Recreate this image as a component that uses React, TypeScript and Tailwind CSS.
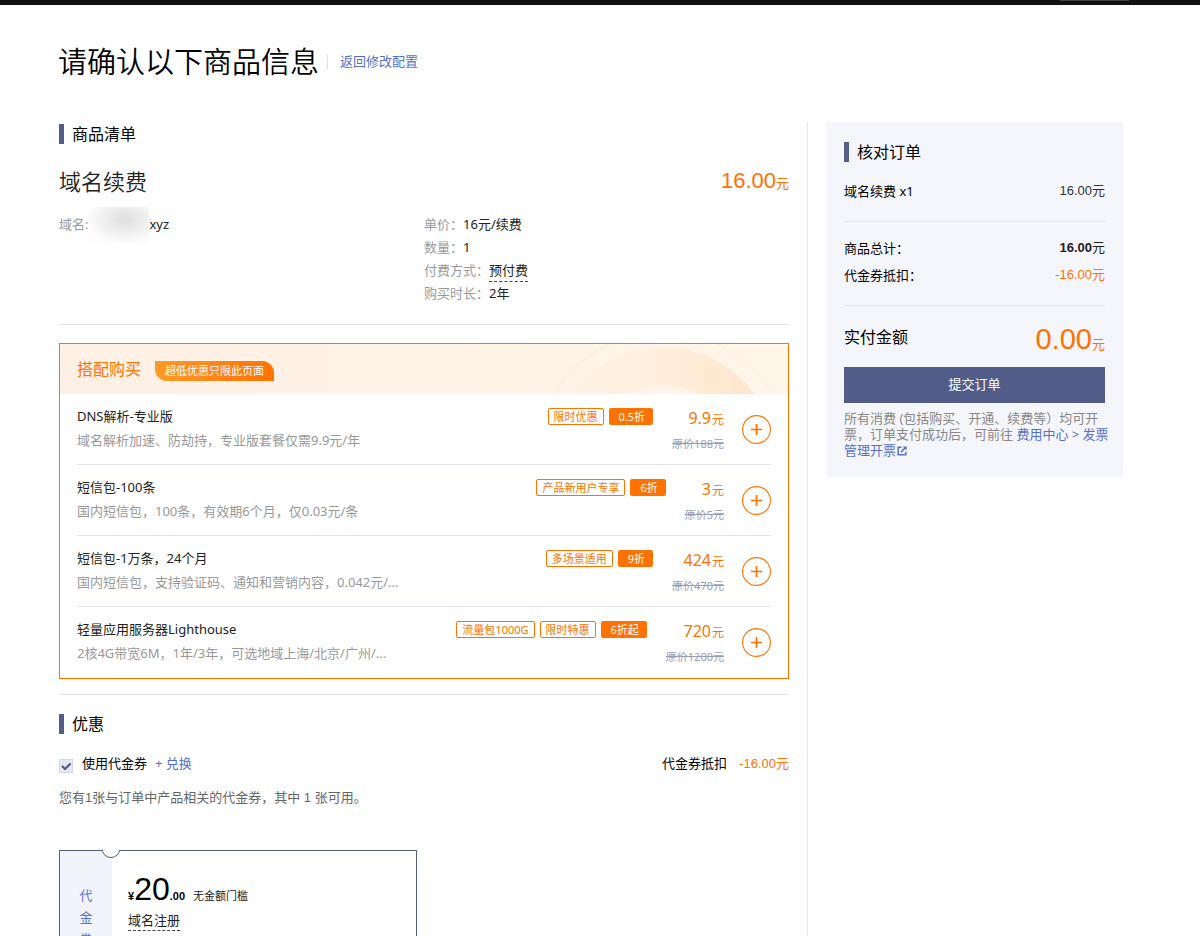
import React, { useState } from "react";

type Offer = {
  name: string;
  desc: string;
  tags: string[];
  discount: string;
  price: string;
  origin: string;
};

const offers: Offer[] = [
  {
    name: "DNS解析-专业版",
    desc: "域名解析加速、防劫持，专业版套餐仅需9.9元/年",
    tags: ["限时优惠"],
    discount: "0.5折",
    price: "9.9",
    origin: "原价188元",
  },
  {
    name: "短信包-100条",
    desc: "国内短信包，100条，有效期6个月，仅0.03元/条",
    tags: ["产品新用户专享"],
    discount: "6折",
    price: "3",
    origin: "原价5元",
  },
  {
    name: "短信包-1万条，24个月",
    desc: "国内短信包，支持验证码、通知和营销内容，0.042元/...",
    tags: ["多场景适用"],
    discount: "9折",
    price: "424",
    origin: "原价470元",
  },
  {
    name: "轻量应用服务器Lighthouse",
    desc: "2核4G带宽6M，1年/3年，可选地域上海/北京/广州/...",
    tags: ["流量包1000G", "限时特惠"],
    discount: "6折起",
    price: "720",
    origin: "原价1200元",
  },
];

const SectionTitle = ({ children }: { children: React.ReactNode }) => (
  <h2 className="flex h-5 items-center gap-2 text-base leading-5 text-black">
    <span className="h-5 w-[5px] bg-[#535e88]" />
    {children}
  </h2>
);

const OfferRow = ({ name, desc, tags, discount, price, origin }: Offer) => (
  <li className="flex h-[71px] border-b border-[#e5e7ec] last:border-transparent">
    <div className="min-w-0 flex-1 pt-3">
      <h3 className="truncate leading-5 text-[#222]">{name}</h3>
      <p className="mt-1 truncate leading-5 text-[#999]">{desc}</p>
    </div>
    <div className="mt-[14px] flex h-[17px] shrink-0 gap-[5px] text-[11px] leading-[15px]">
      {tags.map((tag) => (
        <span key={tag} className="rounded-xs border border-[#ff7200] px-[5px] text-[#ff7200]">
          {tag}
        </span>
      ))}
      <span className="rounded-xs bg-[#ff7200] pt-px pr-2 pl-[10px] text-white">{discount}</span>
    </div>
    <div className="ml-[19px] shrink-0 pt-3 text-right">
      <p className="flex items-baseline justify-end gap-px leading-6 text-[#ff7200]">
        <span className="text-base leading-6">{price}</span>
        <span className="text-xs leading-6">元</span>
      </p>
      <del className="block text-[11px] leading-6 text-[#959fb8]">{origin}</del>
    </div>
    <button
      aria-label={`添加 ${name}`}
      className="mt-[21px] ml-[18px] h-[29px] w-[29px] shrink-0 cursor-pointer text-[#ff7200]"
    >
      <svg viewBox="0 0 29 29" className="h-full w-full" fill="none" stroke="currentColor">
        <circle cx="14.5" cy="14.5" r="13.9" strokeWidth="1.1" />
        <path d="M9 14.5h11M14.5 9v11" strokeWidth="1.7" />
      </svg>
    </button>
  </li>
);

const Bundle = () => (
  <section className="mt-[18px] border border-[#ff7200]">
    <div className="relative flex h-[50px] items-center gap-[14px] bg-linear-to-r from-[#fff0e5] to-[#fff5e8] px-[17px]">
      <svg
        viewBox="0 0 248 50"
        className="absolute top-0 right-0 h-[50px] w-[248px]"
        fill="none"
      >
        <defs>
          <linearGradient id="arc" x1="0" y1="0.3" x2="1" y2="0.3">
            <stop offset="0" stopColor="#fff3e5" />
            <stop offset="0.4" stopColor="#fff0df" />
            <stop offset="1" stopColor="#ffe3c8" />
          </linearGradient>
        </defs>
        <circle cx="123" cy="117" r="128.7" stroke="#ffebd4" />
        <circle cx="123" cy="117" r="113.5" fill="url(#arc)" />
        <circle cx="123" cy="117" r="76" fill="#fff4e7" />
      </svg>
      <h2 className="relative text-base text-[#ff7200]">搭配购买</h2>
      <span className="relative mt-1 h-5 rounded-tr-xl rounded-bl-xl bg-linear-to-r from-[#ff9a26] to-[#ff7200] px-[10px] text-[11px] leading-[19px] text-white">
        超低优惠只限此页面
      </span>
    </div>
    <ul className="px-[17px]">
      {offers.map((offer) => (
        <OfferRow key={offer.name} {...offer} />
      ))}
    </ul>
  </section>
);

const Field = ({ label, children }: { label: string; children: React.ReactNode }) => (
  <div className="flex h-[23px] items-center">
    <dt className="text-[#999]">{label}</dt>
    <dd>{children}</dd>
  </div>
);

const Coupon = () => (
  <div className="relative mt-[42px] flex h-[126px] w-[358px] border border-[#535e88]">
    <svg viewBox="0 0 18 9" className="absolute -top-px left-[42px] h-[9px] w-[18px]">
      <path d="M0.5 0A8.5 7.5 0 0 0 17.5 0" fill="#fff" stroke="#535e88" />
      <path d="M1 0h16" stroke="#fff" strokeWidth="2.4" />
    </svg>
    <div className="flex w-[52px] flex-col items-center bg-[#f1f5fb] pt-[33px] leading-[22px] text-[#5b74cc]">
      <span>代</span>
      <span>金</span>
      <span>券</span>
    </div>
    <div className="flex-1 pt-5 pl-4">
      <p className="flex h-9 items-baseline font-['Liberation_Sans','Noto_Sans_CJK_SC',sans-serif] text-black">
        <span className="text-[11px] leading-9 font-bold">¥</span>
        <span className="text-[32px] leading-9">20</span>
        <span className="text-[11px] leading-9 font-bold">.00</span>
        <span className="ml-2 text-[11px] leading-9 text-[#222]">无金额门槛</span>
      </p>
      <div className="mt-[3px] flex">
        <span className="border-b border-dashed border-[#444] leading-5 text-[#222]">域名注册</span>
      </div>
    </div>
  </div>
);

const Summary = () => (
  <aside className="w-[297px] shrink-0 self-start bg-[#f5f6fb] px-[18px] pt-5 pb-[19px] text-black">
    <SectionTitle>核对订单</SectionTitle>
    <div className="mt-[19px] flex justify-between leading-5">
      <span>域名续费 x1</span>
      <span className="font-['Liberation_Sans','Noto_Sans_CJK_SC',sans-serif] text-[#333]">16.00元</span>
    </div>
    <hr className="mt-5 border-[#e3e5eb]" />
    <div className="mt-4 flex justify-between leading-5">
      <span>商品总计：</span>
      <span className="font-['Liberation_Sans','Noto_Sans_CJK_SC',sans-serif] text-[#222]">
        <b>16.00</b>元
      </span>
    </div>
    <div className="mt-[7px] flex justify-between leading-5">
      <span>代金券抵扣：</span>
      <span className="font-['Liberation_Sans','Noto_Sans_CJK_SC',sans-serif] text-[#ff7200]">-16.00元</span>
    </div>
    <hr className="mt-5 border-[#e3e5eb]" />
    <div className="mt-[13px] flex h-9 items-center justify-between">
      <span className="text-base">实付金额</span>
      <span className="flex h-9 items-baseline font-['Liberation_Sans','Noto_Sans_CJK_SC',sans-serif] text-[#ff7200]">
        <span className="text-[29px] leading-10">0.00</span>
        <span className="leading-5">元</span>
      </span>
    </div>
    <button className="mt-3 h-9 w-full cursor-pointer bg-[#515d88] text-white">提交订单</button>
    <p className="mt-[7px] leading-4 whitespace-nowrap text-[#888]">
      所有消费 (包括购买、开通、续费等）均可开
      <br />
      票，订单支付成功后，可前往{" "}
      <a href="#" className="text-[#5570cb]">
        费用中心 &gt; 发票
        <br />
        管理开票
        <svg viewBox="0 0 10 10" className="ml-px inline h-[10px] w-[10px] align-[-1px]" fill="none" stroke="currentColor">
          <path d="M4.5 1.2H1.2v7.6h7.6V6" strokeWidth="1.5" />
          <path d="M3.8 6.2L8 2" strokeWidth="1.6" />
          <path d="M5.6 0.4h4v4z" fill="currentColor" stroke="none" />
        </svg>
      </a>
    </p>
  </aside>
);

const App = () => {
  const [useCoupon, setUseCoupon] = useState(true);

  return (
    <div className="bg-white font-['Noto_Sans','Noto_Sans_CJK_SC',sans-serif] text-[13px] text-[#222]">
      {/* Top bar */}
      <div className="flex h-[5px] justify-end bg-[#111] pr-[71px]">
        <span className="h-px w-[69px] bg-[#444]" />
      </div>

      <header className="flex items-center pt-[37px] pl-[58px]">
        <h1 className="text-[29px] leading-10 font-[350] text-black">请确认以下商品信息</h1>
        <span className="ml-2 h-[14px] w-px bg-[#dcdfe6]" />
        <a href="#" className="ml-3 text-[#5570cb]">
          返回修改配置
        </a>
      </header>

      <div className="mt-10 flex pr-[77px] pl-[59px]">
        <main className="mr-[18px] min-w-0 flex-1 border-r border-[#e3e5eb] pt-0.5 pr-[18px]">
          <SectionTitle>商品清单</SectionTitle>
          <div className="mt-[21px] flex h-8 items-center justify-between">
            <h3 className="text-[22px] leading-8 font-[350]">域名续费</h3>
            <p className="flex items-baseline font-['Liberation_Sans','Noto_Sans_CJK_SC',sans-serif] text-[#ff7200]">
              <span className="text-[22px] leading-8">16.00</span>
              <span className="leading-5">元</span>
            </p>
          </div>
          <dl className="mt-4 grid grid-cols-2">
            <div>
              <div className="flex h-[23px] items-center">
                <dt className="text-[#999]">域名:</dt>
                <dd className="flex items-center">
                  <span className="-my-2 h-9 w-[61px] bg-radial-[at_60%_35%] from-[#e2e2e2] from-10% to-[#fdfdfd] to-75%" />
                  xyz
                </dd>
              </div>
            </div>
            <div>
              <Field label="单价：">16元/续费</Field>
              <Field label="数量：">1</Field>
              <Field label="付费方式：">
                <span className="block h-[23px] border-b border-dashed border-[#444] leading-[22px]">预付费</span>
              </Field>
              <Field label="购买时长：">2年</Field>
            </div>
          </dl>
          <hr className="mt-[19px] border-[#e1e6ec]" />

          <Bundle />

          <hr className="mt-[15px] mb-[19px] border-[#e1e6ec]" />
          <SectionTitle>优惠</SectionTitle>
          <div className="mt-5 flex h-5 items-center">
            <label className="flex items-center gap-[9px] text-black">
              <span className="relative mt-1 h-[14px] w-[14px]">
                <input
                  type="checkbox"
                  checked={useCoupon}
                  onChange={(e) => setUseCoupon(e.target.checked)}
                  className="peer block h-[14px] w-[14px] appearance-none border border-[#d5d9e6] bg-[#e6e8f0]"
                />
                <svg
                  viewBox="0 0 14 14"
                  className="pointer-events-none absolute inset-0 hidden h-[14px] w-[14px] peer-checked:block"
                  fill="none"
                  stroke="#4c5887"
                  strokeWidth="2.2"
                >
                  <path d="M3 7l3 3 5.5-5.5" />
                </svg>
              </span>
              使用代金券
            </label>
            <button className="ml-2 cursor-pointer text-[#5570cb]">+ 兑换</button>
            <span className="ml-auto text-black">代金券抵扣</span>
            <span className="ml-3 font-['Liberation_Sans','Noto_Sans_CJK_SC',sans-serif] text-[#ff7200]">
              -16.00元
            </span>
          </div>
          <p className="mt-[14px] font-['Liberation_Sans','Noto_Sans_CJK_SC',sans-serif] leading-5 text-[#666]">
            您有1张与订单中产品相关的代金券，其中 1 张可用。
          </p>
          <Coupon />
        </main>
        <Summary />
      </div>
    </div>
  );
};

export default App;
